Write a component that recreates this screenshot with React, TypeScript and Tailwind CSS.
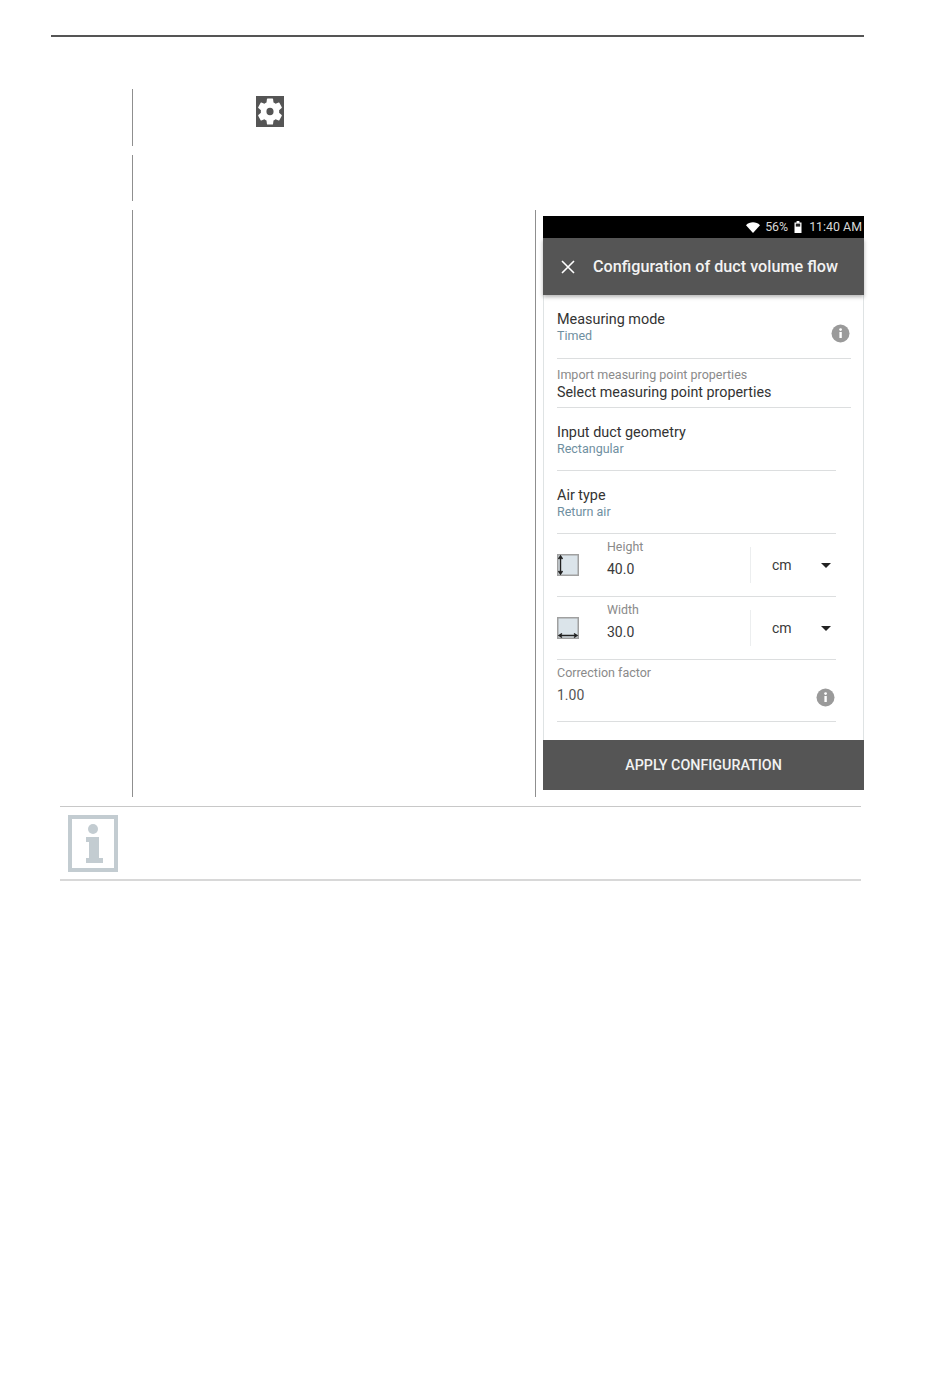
import React from "react";

const Divider = ({ wide }: { wide?: boolean }) => (
  <div className={`h-px bg-[#dcdedf] ${wide ? "w-[294px]" : "w-[279px]"}`} />
);

const Info = () => (
  <svg width="19" height="19" viewBox="0 0 19 19">
    <circle cx="9.5" cy="9.5" r="9" fill="#9a9a9a" />
    <rect x="8.4" y="8" width="2.4" height="6" fill="#fff" />
    <circle cx="9.6" cy="5.6" r="1.4" fill="#fff" />
  </svg>
);

const Gear = () => (
  <svg width="28" height="31" viewBox="1 0.5 22 23" className="bg-[#555555]" preserveAspectRatio="none">
    <path
      fill="#fff"
      d="M19.14 12.94c.04-.3.06-.61.06-.94s-.02-.64-.07-.94l2.03-1.58a.5.5 0 0 0 .12-.61l-1.92-3.32a.5.5 0 0 0-.59-.22l-2.39.96a7 7 0 0 0-1.62-.94l-.36-2.54a.48.48 0 0 0-.48-.41h-3.84a.48.48 0 0 0-.47.41l-.36 2.54a7.2 7.2 0 0 0-1.62.94l-2.39-.96a.49.49 0 0 0-.59.22L2.74 8.87a.48.48 0 0 0 .12.61l2.03 1.58c-.05.3-.09.63-.09.94s.02.64.07.94l-2.03 1.58a.5.5 0 0 0-.12.61l1.92 3.32c.12.22.37.29.59.22l2.39-.96c.5.38 1.03.7 1.62.94l.36 2.54c.05.24.24.41.48.41h3.84c.24 0 .44-.17.47-.41l.36-2.54a7 7 0 0 0 1.62-.94l2.39.96c.22.08.47 0 .59-.22l1.92-3.32a.48.48 0 0 0-.12-.61zM12 14.8A2.8 2.8 0 1 1 12 9.2a2.8 2.8 0 0 1 0 5.6z"
    />
  </svg>
);

const HeightIcon = () => (
  <svg width="22" height="22" viewBox="0 0 22 22">
    <rect x="0.75" y="0.75" width="20.5" height="20.5" fill="#dbe4ea" stroke="#a0a0a0" strokeWidth="1.5" />
    <path d="M3.5 2v18M1.5 5 3.5 2l2 3M1.5 17l2 3 2-3" fill="none" stroke="#222" strokeWidth="1.4" />
  </svg>
);

const WidthIcon = () => (
  <svg width="22" height="22" viewBox="0 0 22 22">
    <rect x="0.75" y="0.75" width="20.5" height="20.5" fill="#dbe4ea" stroke="#a0a0a0" strokeWidth="1.5" />
    <path d="M2 18.5h18M5 16.5l-3 2 3 2M17 16.5l3 2-3 2" fill="none" stroke="#222" strokeWidth="1.4" />
  </svg>
);

const Caret = () => <div className="w-0 h-0 border-x-[5px] border-x-transparent border-t-[5px] border-t-[#222]" />;

const SelectRow = ({ label, value, icon }: { label: string; value: string; icon: React.ReactNode }) => (
  <div className="h-[62px] w-[279px] flex items-center">
    <div className="w-[50px] shrink-0">{icon}</div>
    <div className="w-[143px] shrink-0 h-full flex flex-col pt-[5px]">
      <div className="text-[12.4px] leading-[16px] text-[#8a8a8a]">{label}</div>
      <div className="text-[14px] leading-[18px] mt-[5px] text-[#3a3a3a]">{value}</div>
    </div>
    <div className="h-[36px] flex-1 border-l border-[#eceeef] flex items-center pl-[21px] pr-[5px] justify-between">
      <span className="text-[14px] text-[#3a3a3a]">cm</span>
      <Caret />
    </div>
  </div>
);

const TwoLine = ({ title, sub }: { title: string; sub: string }) => (
  <div className="pt-[1px]">
    <div className="text-[14.4px] leading-[18px] text-[#333]">{title}</div>
    <div className="text-[12.5px] leading-[16px] mt-[-1px] text-[#6f8f9f]">{sub}</div>
  </div>
);

const Phone = () => (
  <div className="w-[321px] h-[574px] flex flex-col">
    <div className="h-[22px] bg-black flex items-center justify-end pr-[2px] gap-[5px] text-[12.4px] text-[#d8d8d8]">
      <svg width="14" height="11" viewBox="0 0 14 11"><path d="M0 3.2C3.8-.6 10.2-.6 14 3.2L7 11z" fill="#fff" /></svg>
      <span>56%</span>
      <svg width="8" height="12" viewBox="0 0 8 12" className="ml-[1px] mr-[2px]">
        <path d="M2.6 0h2.8v1.4H7.5V12H.5V1.4h2.1z" fill="#fff" />
        <rect x="1.8" y="2.6" width="4.4" height="3" fill="#222" />
      </svg>
      <span>11:40 AM</span>
    </div>
    <div className="h-[57px] bg-[#555555] flex items-center shadow-[0_2px_4px_rgba(0,0,0,0.3)] relative">
      <svg width="14" height="14" viewBox="0 0 14 14" className="ml-[18px] mr-[18px] shrink-0">
        <path d="M1 1l12 12M13 1L1 13" stroke="#fff" strokeWidth="1.6" />
      </svg>
      <span className="text-[16.2px] font-medium text-[#f2f2f2] whitespace-nowrap pt-[2px]">Configuration of duct volume flow</span>
    </div>
    <div className="flex-1 border-x border-[#dfe3e4] pl-[13px] flex flex-col">
      <div className="h-[63px] w-[294px] pt-[15px] pr-[1px] flex justify-between items-start">
        <TwoLine title="Measuring mode" sub="Timed" />
        <div className="mt-[14px]"><Info /></div>
      </div>
      <Divider wide />
      <div className="h-[48px] pt-[8px]">
        <div className="text-[12.5px] leading-[16px] text-[#8a8a8a]">Import measuring point properties</div>
        <div className="text-[14.3px] leading-[18px] text-[#333]">Select measuring point properties</div>
      </div>
      <Divider wide />
      <div className="h-[62px] pt-[15px]"><TwoLine title="Input duct geometry" sub="Rectangular" /></div>
      <Divider />
      <div className="h-[62px] pt-[15px]"><TwoLine title="Air type" sub="Return air" /></div>
      <Divider />
      <SelectRow label="Height" value="40.0" icon={<HeightIcon />} />
      <Divider />
      <SelectRow label="Width" value="30.0" icon={<WidthIcon />} />
      <Divider />
      <div className="h-[61px] w-[279px] pt-[5px] flex justify-between items-start">
        <div>
          <div className="text-[12.5px] leading-[16px] text-[#8a8a8a]">Correction factor</div>
          <div className="text-[14px] leading-[18px] mt-[5px] text-[#555]">1.00</div>
        </div>
        <div className="mt-[23px] mr-[1px]"><Info /></div>
      </div>
      <Divider />
    </div>
    <div className="h-[50px] bg-[#555555] flex items-center justify-center pt-[2px] text-[14.3px] font-medium text-[#f2f2f2]">
      APPLY CONFIGURATION
    </div>
  </div>
);

export default function App() {
  return (
    <div className="w-[950px] h-[1391px] bg-white pt-[35px] pl-[51px] font-['Roboto',sans-serif]">
      <div className="w-[813px] h-[2px] bg-[#555555]" />
      <div className="ml-[81px] mt-[52px] flex flex-col gap-[9px]">
        <div className="h-[57px] border-l border-[#8f8f8f] pt-[7px] pl-[123px]"><Gear /></div>
        <div className="h-[46px] border-l border-[#8f8f8f]" />
        <div className="h-[587px] border-l border-[#8f8f8f] flex">
          <div className="w-[403px] border-r border-[#8f8f8f]" />
          <div className="ml-[7px] mt-[6px]"><Phone /></div>
        </div>
      </div>
      <div className="ml-[9px] mt-[9px] w-[801px] h-[75px] border-t border-b-2 border-t-[#c8c8c8] border-b-[#d8d8d8] pt-[8px] pl-[8px]">
        <div className="w-[50px] h-[57px] border-[4px] border-[#c3ccd1] flex items-center justify-center">
          <svg width="24" height="42" viewBox="0 0 24 42">
            <circle cx="12" cy="6" r="5" fill="#c3ccd1" />
            <path d="M5 14h13v21h4v5H5v-5h3V19H5z" fill="#c3ccd1" />
          </svg>
        </div>
      </div>
    </div>
  );
}
